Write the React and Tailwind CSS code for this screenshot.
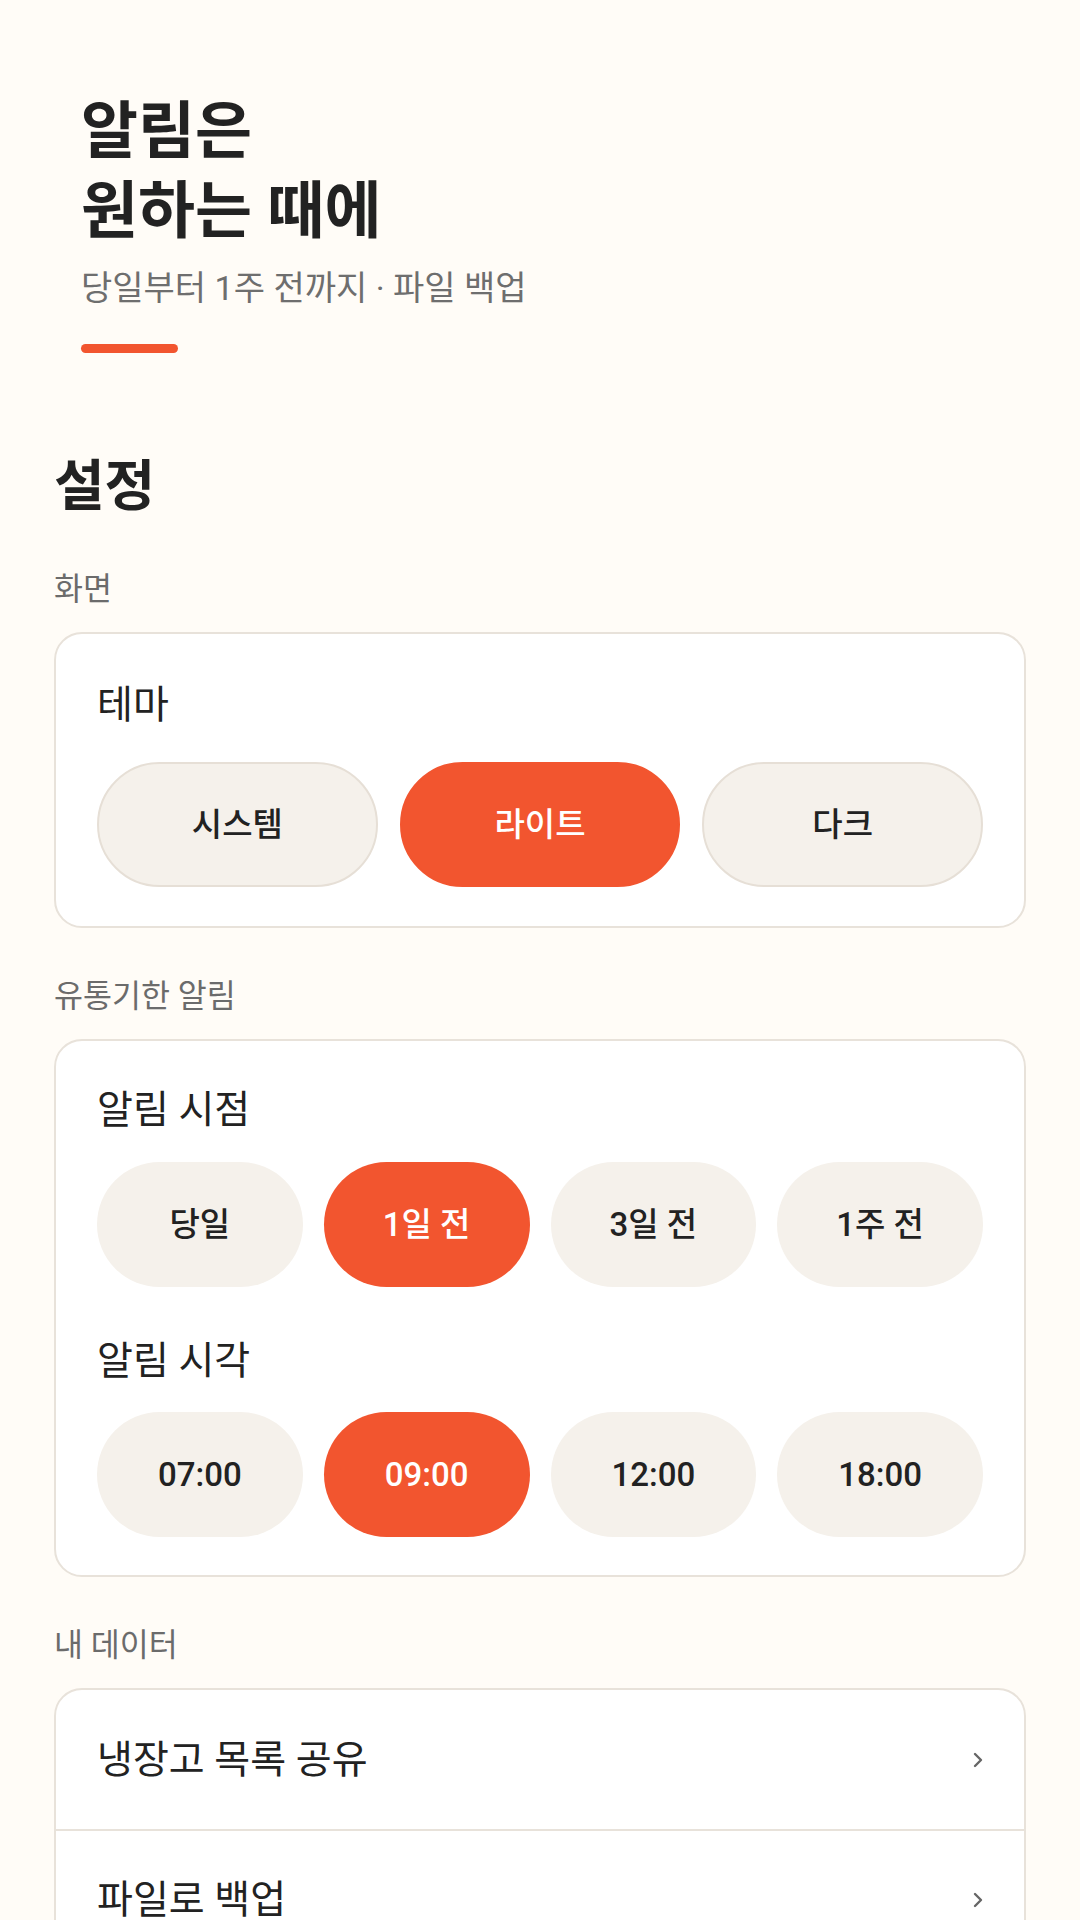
import React from "react";

const themeOptions = ["시스템", "라이트", "다크"];
const dayOptions = ["당일", "1일 전", "3일 전", "1주 전"];
const timeOptions = ["07:00", "09:00", "12:00", "18:00"];
const dataRows = ["냉장고 목록 공유", "파일로 백업"];

const Chevron = () => (
  <svg width="10" height="16" viewBox="0 0 10 16" fill="none" className="shrink-0">
    <path d="M2 2l6 6-6 6" stroke="#666666" strokeWidth="2.4" strokeLinecap="round" strokeLinejoin="round" />
  </svg>
);

const SectionLabel = ({ children }) => (
  <div className="mt-[48px] mb-[21px] text-[31.5px] leading-[42px] text-[#6b6b6b]">{children}</div>
);

const Pill = ({ label, active, bordered }) => (
  <button
    className={`flex h-[125px] items-center justify-center rounded-full text-[33px] font-medium ${
      active
        ? "bg-[#f2552f] text-white"
        : "bg-[#f5f1eb] text-[#222222]"
    } ${bordered ? (active ? "border-2 border-[#f2552f]" : "border-2 border-[#e6dfd6]") : ""}`}
  >
    {label}
  </button>
);

export default function App() {
  const [theme, setTheme] = React.useState("라이트");
  const [day] = React.useState("1일 전");
  const [time] = React.useState("09:00");

  return (
    <div
      className="min-h-screen bg-[#fffcf7] text-[#222222]"
      style={{ fontFamily: "Roboto, 'Noto Sans CJK KR', sans-serif" }}
    >
      <header className="px-[81px] pt-[92px]">
        <h1 className="text-[62px] leading-[80px] font-bold">
          알림은
          <br />
          원하는 때에
        </h1>
        <p className="mt-[14px] text-[34px] leading-[44px] text-[#6e6e6e]">당일부터 1주 전까지 · 파일 백업</p>
        <div className="mt-[34px] h-[9px] w-[97px] rounded-full bg-[#f2552f]" />
      </header>

      <main className="px-[54px] pb-[60px]">
        <h2 className="mt-[98px] text-[55px] leading-[70px] font-bold">설정</h2>

        <SectionLabel>화면</SectionLabel>
        <section className="rounded-[28px] border-2 border-[#e8e2da] bg-white px-[41px] pt-[44px] pb-[39px]">
          <div className="text-[39px] leading-[54px]">테마</div>
          <div className="mt-[30px] grid grid-cols-3 gap-[22px]">
            {themeOptions.map((t) => (
              <div key={t} onClick={() => setTheme(t)} className="contents">
                <Pill label={t} active={theme === t} bordered />
              </div>
            ))}
          </div>
        </section>

        <SectionLabel>유통기한 알림</SectionLabel>
        <section className="rounded-[28px] border-2 border-[#e8e2da] bg-white px-[41px] pt-[42px] pb-[38px]">
          <div className="text-[39px] leading-[54px]">알림 시점</div>
          <div className="mt-[25px] grid grid-cols-4 gap-[21px]">
            {dayOptions.map((d) => (
              <Pill key={d} label={d} active={day === d} />
            ))}
          </div>
          <div className="mt-[47px] text-[39px] leading-[54px]">알림 시각</div>
          <div className="mt-[24px] grid grid-cols-4 gap-[21px]">
            {timeOptions.map((t) => (
              <Pill key={t} label={t} active={time === t} />
            ))}
          </div>
        </section>

        <SectionLabel>내 데이터</SectionLabel>
        <section className="overflow-hidden rounded-[28px] border-2 border-[#e8e2da] bg-white">
          {dataRows.map((row, i) => (
            <div
              key={row}
              className={`flex h-[139px] items-center justify-between px-[41px] ${
                i > 0 ? "border-t-2 border-[#e8e2da]" : ""
              }`}
            >
              <span className="text-[39px] leading-[54px]">{row}</span>
              <Chevron />
            </div>
          ))}
        </section>
      </main>
    </div>
  );
}
